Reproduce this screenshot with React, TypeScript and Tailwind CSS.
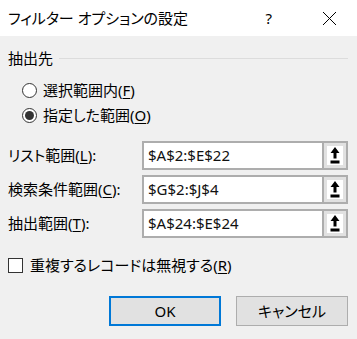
import React from "react";

const font = "font-['Noto_Sans','Noto_Sans_CJK_JP',sans-serif] [font-feature-settings:'palt']";

function Radio({ checked, label, hot }: { checked?: boolean; label: string; hot: string }) {
  return (
    <div className="flex items-center h-[20px]">
      <span className="w-[15px] h-[15px] rounded-full border border-[#333] bg-white flex items-center justify-center">
        {checked && <span className="w-[9px] h-[9px] rounded-full bg-[#333]" />}
      </span>
      <span className="ml-[6px] text-[15px] leading-none">
        {label}(<span className="underline underline-offset-2">{hot}</span>)
      </span>
    </div>
  );
}

function Field({ label, hot, value }: { label: string; hot: string; value: string }) {
  return (
    <div className="flex items-center h-[29px]">
      <div className="w-[134px] text-[15px] leading-none">
        {label}(<span className="underline underline-offset-2">{hot}</span>):
      </div>
      <div className="w-[206px] h-full flex border-2 border-[#adadad] bg-white">
        <div className="flex-1 flex items-center pl-[4px] text-[15px] text-[#111]">{value}</div>
        <div className="w-[24px] h-full border-l-2 border-[#adadad] bg-[#e1e1e1] p-[3px]">
          <div className="w-full h-full bg-white flex items-center justify-center">
            <svg width="10" height="17" viewBox="0 0 10 17">
              <path d="M5 0 L9.5 6 L6.5 6 L6.5 11.5 L3.5 11.5 L3.5 6 L0.5 6 Z" fill="#000" />
              <rect x="0.5" y="13.5" width="9" height="3" fill="#000" />
            </svg>
          </div>
        </div>
      </div>
    </div>
  );
}

export default function App() {
  return (
    <div className={`w-[357px] h-[339px] bg-[#f0f0f0] text-black ${font}`}>
      {/* Title bar */}
      <div className="h-[36px] bg-white flex items-center pl-[8px]">
        <span className="text-[15px] leading-none">フィルター オプションの設定</span>
        <span className="ml-auto text-[15px] leading-none">?</span>
        <span className="ml-[50px] mr-[20px] flex items-center">
          <svg width="15" height="15" viewBox="0 0 15 15">
            <path d="M1 1 L14 14 M14 1 L1 14" stroke="#000" strokeWidth="1" />
          </svg>
        </span>
      </div>

      <div className="pl-[8px] pr-[9px]">
        {/* Group header */}
        <div className="mt-[12px] h-[20px] flex items-center">
          <span className="text-[15px] leading-none">抽出先</span>
          <div className="flex-1 h-px bg-[#dcdcdc] ml-[6px]" />
        </div>

        <div className="pl-[14px]">
          <div className="mt-[12px]">
            <Radio label="選択範囲内" hot="F" />
          </div>
          <div className="mt-[5px]">
            <Radio checked label="指定した範囲" hot="O" />
          </div>
        </div>

        <div className="mt-[16px] flex flex-col gap-[5px]">
          <Field label="リスト範囲" hot="L" value="$A$2:$E$22" />
          <Field label="検索条件範囲" hot="C" value="$G$2:$J$4" />
          <Field label="抽出範囲" hot="T" value="$A$24:$E$24" />
        </div>

        <div className="mt-[19px] flex items-center h-[16px]">
          <span className="w-[15px] h-[15px] border border-[#333] bg-white" />
          <span className="ml-[7px] text-[15px] leading-none">
            重複するレコードは無視する(<span className="underline underline-offset-2">R</span>)
          </span>
        </div>

        <div className="mt-[23px] flex justify-end gap-[15px]">
          <button className="w-[112px] h-[30px] bg-[#e1e1e1] border-2 border-[#0078d7] text-[15px]">
            OK
          </button>
          <button className="w-[112px] h-[30px] bg-[#e1e1e1] border border-[#adadad] text-[15px]">
            キャンセル
          </button>
        </div>
      </div>
    </div>
  );
}
